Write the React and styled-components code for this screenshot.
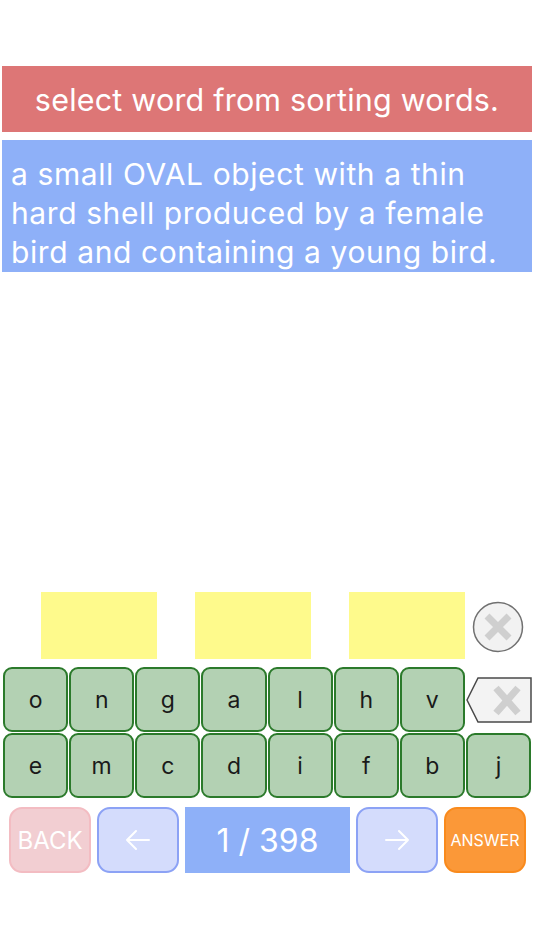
import React from "react";
import styled, { createGlobalStyle } from "styled-components";

const rowOne = ["o", "n", "g", "a", "l", "h", "v"];
const rowTwo = ["e", "m", "c", "d", "i", "f", "b", "j"];

function ClearIcon() {
	return (
		<svg width="52" height="52" viewBox="0 0 52 52">
			<circle cx="26" cy="26" r="24.5" fill="#f2f2f2" stroke="#707070" strokeWidth="1.5" />
			<path d="M15 15 L37 37 M37 15 L15 37" stroke="#cfcfcf" strokeWidth="7" strokeLinecap="butt" />
		</svg>
	);
}

function BackspaceIcon() {
	return (
		<svg width="66" height="46" viewBox="0 0 66 46">
			<path d="M1 23 L12 1 H65 V45 H12 Z" fill="#f3f3f3" stroke="#4a4a4a" strokeWidth="1.5" strokeLinejoin="miter" />
			<path d="M30 11 L52 36 M52 11 L30 36" stroke="#cfcfcf" strokeWidth="7" />
		</svg>
	);
}

function Arrow({ dir }) {
	const d = dir === "left" ? "M3 14 H25 M3 14 L12 5 M3 14 L12 23" : "M3 14 H25 M25 14 L16 5 M25 14 L16 23";
	return (
		<svg width="28" height="28" viewBox="0 0 28 28">
			<path d={d} stroke="#fff" strokeWidth="2" fill="none" strokeLinecap="round" strokeLinejoin="round" />
		</svg>
	);
}

function App() {
	return (
		<>
			<GlobalStyle />
			<Page>
				<Title>select word from sorting words.</Title>
				<Definition>a small OVAL object with a thin hard shell produced by a female bird and containing a young bird.</Definition>

				<AnswerRow>
					<Slot />
					<Slot />
					<Slot />
					<ClearButton>
						<ClearIcon />
					</ClearButton>
				</AnswerRow>

				<Keyboard>
					{rowOne.map((k) => (
						<Key key={k}>{k}</Key>
					))}
					<BackspaceButton>
						<BackspaceIcon />
					</BackspaceButton>
					{rowTwo.map((k) => (
						<Key key={k}>{k}</Key>
					))}
				</Keyboard>

				<Controls>
					<NavButton $variant="back">BACK</NavButton>
					<NavButton $variant="arrow">
						<Arrow dir="left" />
					</NavButton>
					<Counter>1 / 398</Counter>
					<NavButton $variant="arrow">
						<Arrow dir="right" />
					</NavButton>
					<NavButton $variant="answer">ANSWER</NavButton>
				</Controls>
			</Page>
		</>
	);
}

export default App;

const GlobalStyle = createGlobalStyle`
	body {
		margin: 0;
		background: #fff;
		font-family: "Inter", "Liberation Sans", sans-serif;
	}
`;

const Page = styled.div`
	width: 534px;
	height: 950px;
	display: flex;
	flex-direction: column;
	padding-top: 66px;
	box-sizing: border-box;
	overflow: hidden;
`;

const Title = styled.div`
	margin: 0 2px;
	height: 66px;
	background: #dd7676;
	color: #fff;
	font-size: 30.5px;
	letter-spacing: 0.2px;
	display: flex;
	align-items: center;
	justify-content: center;
`;

const Definition = styled.div`
	margin: 8px 2px 0;
	height: 132px;
	box-sizing: border-box;
	background: #8eb0f8;
	color: #fff;
	font-size: 30px;
	letter-spacing: 0.6px;
	line-height: 39px;
	padding: 15px 24px 0 9px;
`;

const AnswerRow = styled.div`
	margin-top: 320px;
	height: 67px;
	display: flex;
	align-items: center;
	padding-left: 41px;
	gap: 38px;
`;

const Slot = styled.div`
	width: 116px;
	height: 67px;
	background: #fefa8c;
`;

const ClearButton = styled.div`
	display: flex;
	align-items: center;
	margin-left: -31px;
	margin-top: 2px;
`;

const Keyboard = styled.div`
	margin-top: 8px;
	padding: 0 3px;
	display: grid;
	grid-template-columns: repeat(8, 1fr);
	grid-auto-rows: 65px;
	gap: 1px;
`;

const Key = styled.div`
	background: #b3d1b3;
	border: 2px solid #2b7a2b;
	border-radius: 9px;
	display: flex;
	align-items: center;
	justify-content: center;
	color: #1a1a1a;
	font-size: 23px;
`;

const BackspaceButton = styled.div`
	display: flex;
	align-items: center;
	justify-content: flex-end;
	margin-right: -1px;
`;

const buttonColors = {
	back: { bg: "#f2ced2", border: "#f3bcc2", size: "24px" },
	arrow: { bg: "#d4dcfc", border: "#8ca2f5", size: "24px" },
	answer: { bg: "#fb9838", border: "#f98a1c", size: "16px" },
};

const Controls = styled.div`
	margin-top: 9px;
	padding-left: 9px;
	display: flex;
	gap: 6px;
	height: 66px;
`;

const NavButton = styled.div`
	width: 82px;
	box-sizing: border-box;
	background: ${(p) => buttonColors[p.$variant].bg};
	border: 2px solid ${(p) => buttonColors[p.$variant].border};
	border-radius: 13px;
	color: #fff;
	font-size: ${(p) => buttonColors[p.$variant].size};
	display: flex;
	align-items: center;
	justify-content: center;
`;

const Counter = styled.div`
	width: 165px;
	background: #8eb0f8;
	color: #fff;
	font-size: 32px;
	display: flex;
	align-items: center;
	justify-content: center;
`;
